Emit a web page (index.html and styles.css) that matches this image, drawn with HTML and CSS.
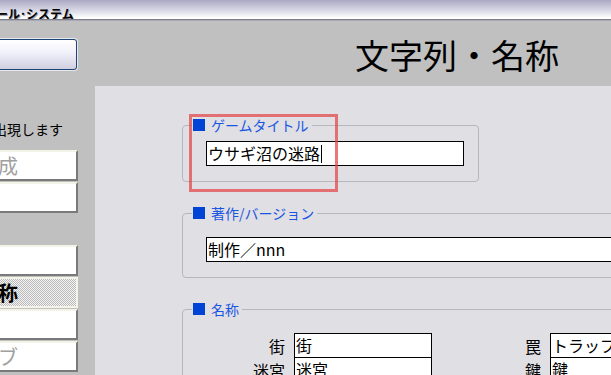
FILE: index.html
```html
<!DOCTYPE html>
<html lang="ja">
<head>
    <meta charset="UTF-8">
    <meta name="viewport" content="width=device-width, initial-scale=1.0">
    <title>ツール･システム</title>
    <link rel="stylesheet" href="styles.css">
</head>
<body>
    <div class="titlebar"><span class="app-name">ツール･システム</span></div>

    <div class="main">
        <div class="sidebar">
            <button class="top-btn"></button>
            <p class="notice">イベントが出現します</p>
            <div class="menu">
                <div class="menu-btn disabled">作成</div>
                <div class="menu-btn"></div>
            </div>
            <div class="menu second">
                <div class="menu-btn"></div>
                <div class="menu-btn active">名称</div>
                <div class="menu-btn"></div>
                <div class="menu-btn disabled">タブ</div>
            </div>
        </div>

        <div class="content">
            <h1 class="page-title">文字列・名称</h1>
            <div class="panel">
                <fieldset class="group group-title">
                    <legend><span class="mark"></span>ゲームタイトル</legend>
                    <div class="field title-field">ウサギ沼の迷路<span class="caret"></span></div>
                </fieldset>

                <fieldset class="group group-wide">
                    <legend><span class="mark"></span>著作/バージョン</legend>
                    <div class="field credit-field">制作／nnn</div>
                </fieldset>

                <fieldset class="group group-wide">
                    <legend><span class="mark"></span>名称</legend>
                    <div class="names">
                        <label class="name-label">街</label>
                        <div class="field">街</div>
                        <label class="name-label">罠</label>
                        <div class="field">トラップ</div>
                        <label class="name-label">迷宮</label>
                        <div class="field">迷宮</div>
                        <label class="name-label">鍵</label>
                        <div class="field">鍵</div>
                    </div>
                </fieldset>

                <div class="highlight"></div>
            </div>
        </div>
    </div>
</body>
</html>
```

FILE: styles.css
```css
body {
    margin: 0;
    padding: 0;
    height: 100vh;
    overflow: hidden;
    background: #c0c0c0;
    font-family: "Noto Sans CJK JP", "DejaVu Sans", sans-serif;
    color: #000;
    display: flex;
    flex-direction: column;
}
.titlebar {
    height: 19px;
    flex: none;
    background: linear-gradient(#a9a9c3, #d8d8e6 55%, #ffffff 95%);
    border-bottom: 1px solid #7e7e8c;
    box-shadow: 0 1px 0 #a9a9b4;
    overflow: hidden;
    white-space: nowrap;
}
.app-name {
    display: inline-block;
    margin-left: -16px;
    font-size: 12px;
    font-weight: bold;
    line-height: 19px;
    text-shadow: 1px 1px 0 #a0a0a8;
}
.main {
    flex: 1;
    display: flex;
    min-height: 0;
    margin-top: 1px;
}
.sidebar {
    flex: none;
    width: 178px;
    margin-left: -100px;
    margin-right: 17px;
    padding-top: 18px;
}
.top-btn {
    display: block;
    width: 177px;
    height: 31px;
    padding: 0;
    border: 1px solid #1d4676;
    border-radius: 3px;
    background: linear-gradient(#ffffff, #f0f0fa 45%, #cfcfe0);
    box-shadow: 0 0 0 1px #e6e6ee;
}
.notice {
    margin: 49px 0 0;
    padding-right: 15px;
    font-size: 14px;
    line-height: 20px;
    text-align: right;
    white-space: nowrap;
}
.menu {
    margin-top: 11px;
}
.menu.second {
    margin-top: 32px;
}
.menu-btn {
    box-sizing: border-box;
    height: 31px;
    margin-bottom: 1px;
    padding-right: 58px;
    background: #fff;
    border-top: 2px solid #f3f3e8;
    border-left: 2px solid #f3f3e8;
    border-right: 2px solid #7a7a7a;
    border-bottom: 2px solid #7a7a7a;
    font-size: 20px;
    line-height: 27px;
    text-align: right;
    white-space: nowrap;
}
.menu-btn.disabled {
    color: #a0a0a0;
}
.menu-btn.active {
    font-weight: bold;
    border-color: #f3f3e8;
    background: repeating-conic-gradient(#b9b9b9 0 25%, #f4f4f4 0 50%) 0 0 / 2px 2px;
}
.content {
    flex: 1;
    min-width: 0;
    display: flex;
    flex-direction: column;
}
.page-title {
    flex: none;
    height: 65px;
    margin: 0;
    padding-right: 52px;
    font-size: 34px;
    font-weight: normal;
    line-height: 68px;
    text-align: right;
    white-space: nowrap;
}
.panel {
    flex: 1;
    position: relative;
    overflow: hidden;
    background: #e0dfe4;
    padding: 32px 0 0 87px;
}
.group {
    box-sizing: border-box;
    margin: 0 0 24px;
    padding: 0 0 15px 9px;
    border: 1px solid #b6b6be;
    border-radius: 4px;
}
.group-title {
    width: 297px;
}
.group-wide {
    width: 560px;
}
legend {
    display: flex;
    align-items: center;
    gap: 6px;
    padding: 0 3px 0 1px;
    font-size: 14px;
    line-height: 14px;
    color: #1a56e2;
}
.mark {
    display: block;
    width: 12px;
    height: 12px;
    background: #0044d6;
}
.field {
    box-sizing: border-box;
    height: 25px;
    padding: 0 1px;
    background: #fff;
    border: 1px solid #000;
    font-size: 16px;
    line-height: 23px;
    white-space: nowrap;
    overflow: hidden;
}
.title-field {
    width: 258px;
    margin: 9px 0 0 14px;
}
.credit-field {
    margin: 17px 0 0 14px;
}
.caret {
    display: inline-block;
    width: 1px;
    height: 18px;
    margin-left: 1px;
    background: #000;
    vertical-align: -3px;
}
.names {
    display: grid;
    grid-template-columns: 102px 138px 118px 138px;
    grid-auto-rows: 24px;
    margin-top: 17px;
}
.name-label {
    padding: 2px 9px 0 0;
    font-size: 16px;
    line-height: 22px;
    text-align: right;
}
.highlight {
    position: absolute;
    left: 94px;
    top: 28px;
    width: 149px;
    height: 78px;
    box-sizing: border-box;
    border: 3px solid rgba(226, 68, 68, 0.72);
}
```
